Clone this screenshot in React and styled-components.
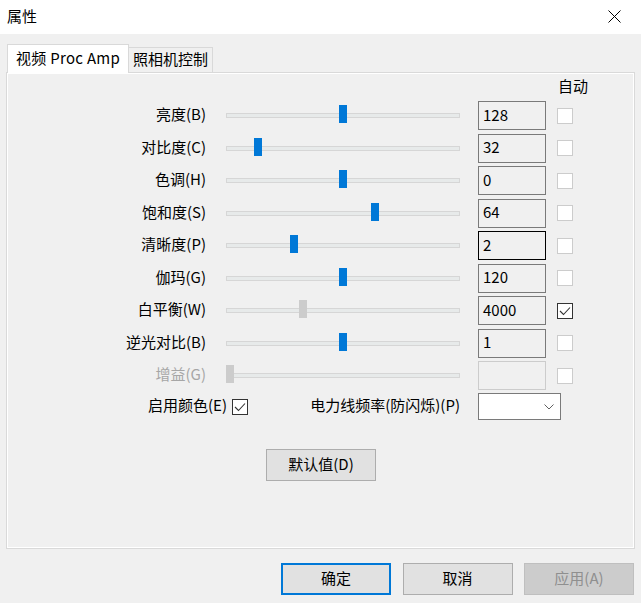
import styled, { createGlobalStyle, css } from "styled-components"

const GlobalStyle = createGlobalStyle`
  html, body {
    margin: 0;
    padding: 0;
    background: #f0f0f0;
  }
  body {
    font-family: "Noto Sans CJK SC", "Noto Sans", sans-serif;
    font-size: 15px;
    color: #000;
  }
`

const Window = styled.div`
  width: 641px;
  height: 603px;
  display: flex;
  flex-direction: column;
  background: #f0f0f0;
  overflow: hidden;
`

const TitleBar = styled.div`
  height: 34px;
  background: #fff;
  display: flex;
  align-items: center;
  justify-content: space-between;
  padding: 0 20px 2px 7px;
  box-sizing: border-box;
  flex-shrink: 0;
`

const Title = styled.span`
  font-size: 15px;
  line-height: 1;
  padding-bottom: 2px;
`

const Body = styled.div`
  padding: 10px 6px 0 6px;
  display: flex;
  flex-direction: column;
`

const Tabs = styled.div`
  display: flex;
  align-items: flex-end;
  height: 28px;
  padding-left: 1px;
  position: relative;
  z-index: 1;
`

const Tab = styled.div`
  box-sizing: border-box;
  border: 1px solid #d9d9d9;
  border-bottom: none;
  display: flex;
  align-items: center;
  justify-content: center;
  font-size: 15px;
  white-space: nowrap;
  padding-bottom: 3px;
  ${p => p.$active ? css`
    background: #fff;
    height: 29px;
    margin-bottom: -1px;
    width: 122px;
    letter-spacing: 0.3px;
  ` : css`
    background: #f0f0f0;
    height: 25px;
    border-left: none;
    width: 84px;
  `}
`

const Panel = styled.div`
  box-sizing: border-box;
  height: 477px;
  width: 629px;
  border: 1px solid #d9d9d9;
  box-shadow: inset 1px 1px 0 #fff, inset -1px -1px 0 #fff;
  padding: 5px 0 0 1px;
  display: flex;
  flex-direction: column;
`

const AutoHeader = styled.div`
  height: 23px;
  padding-left: 550px;
  display: flex;
  align-items: flex-start;
  line-height: 16px;
`

const Rows = styled.div`
  display: flex;
  flex-direction: column;
  gap: 3.5px;
`

const Row = styled.div`
  height: 29px;
  display: flex;
  align-items: center;
`

const Label = styled.div`
  width: ${p => p.$w || 198}px;
  margin-right: ${p => p.$gap ?? 20}px;
  text-align: right;
  white-space: nowrap;
  color: ${p => p.$disabled ? "#a6a6a6" : "#000"};
  line-height: 1;
  padding-bottom: 4px;
`

const Slider = styled.div`
  position: relative;
  width: 234px;
  height: 29px;
  margin-right: 18px;
  display: flex;
  align-items: center;
`

const Track = styled.div`
  width: 100%;
  height: 5px;
  box-sizing: border-box;
  background: #e7eaea;
  border: 1px solid #d6d6d6;
`

const Thumb = styled.div`
  position: absolute;
  top: 4px;
  width: 8px;
  height: 18px;
  background: ${p => p.$disabled ? "#cccccc" : "#0078d7"};
`

const TextBox = styled.div`
  box-sizing: border-box;
  width: 68px;
  height: 29px;
  margin-right: 11px;
  border: 1px solid ${p => p.$focus ? "#000" : p.$disabled ? "#cccccc" : "#7a7a7a"};
  padding: 0 0 3px 4px;
  display: flex;
  align-items: center;
  font-size: 15px;
`

const Check = styled.div`
  box-sizing: border-box;
  width: 16px;
  height: 16px;
  background: #fff;
  border: 1px solid ${p => p.$checked ? "#333" : "#cccccc"};
  display: flex;
  align-items: center;
  justify-content: center;
  flex-shrink: 0;
`

const OptionRow = styled.div`
  height: 27px;
  margin-top: 3px;
  display: flex;
  align-items: center;
`

const ColorGroup = styled.div`
  width: 238px;
  padding-left: 140px;
  box-sizing: border-box;
  display: flex;
  align-items: center;
  gap: 5px;
  white-space: nowrap;

  span {
    padding-bottom: 4px;
    line-height: 1;
  }
`

const Select = styled.div`
  box-sizing: border-box;
  width: 83px;
  height: 27px;
  background: #fff;
  border: 1px solid #7a7a7a;
  display: flex;
  align-items: center;
  justify-content: flex-end;
  padding-right: 6px;
`

const DefaultsRow = styled.div`
  display: flex;
  justify-content: center;
  margin-top: 29px;
`

const Button = styled.div`
  box-sizing: border-box;
  width: 110px;
  height: 32px;
  display: flex;
  align-items: center;
  justify-content: center;
  padding-bottom: 3px;
  background: ${p => p.$disabled ? "#cccccc" : "#e1e1e1"};
  border: ${p => p.$primary ? "2px solid #0078d7" : p.$disabled ? "1px solid #bfbfbf" : "1px solid #adadad"};
  color: ${p => p.$disabled ? "#8f8f8f" : "#000"};
  font-size: 15px;
`

const Footer = styled.div`
  display: flex;
  justify-content: flex-end;
  gap: 11.5px;
  padding: 14px 7px 0 0;
`

const CheckMark = ({ color = "#333" }) => (
  <svg width="12" height="10" viewBox="0 0 12 10">
    <path d="M1 5 L4.5 8.5 L11 1.5" fill="none" stroke={color} strokeWidth="1.1" />
  </svg>
)

const rows = [
  { label: "亮度(B)", value: "128", pos: 0.5 },
  { label: "对比度(C)", value: "32", pos: 0.125 },
  { label: "色调(H)", value: "0", pos: 0.5 },
  { label: "饱和度(S)", value: "64", pos: 0.64 },
  { label: "清晰度(P)", value: "2", pos: 0.285, focus: true },
  { label: "伽玛(G)", value: "120", pos: 0.5 },
  { label: "白平衡(W)", value: "4000", pos: 0.324, auto: true, thumbDisabled: true },
  { label: "逆光对比(B)", value: "1", pos: 0.5 },
  { label: "增益(G)", value: "", pos: 0, disabled: true },
]

const App = () => {
  return (
    <Window>
      <GlobalStyle />
      <TitleBar>
        <Title>属性</Title>
        <svg width="13" height="13" viewBox="0 0 13 13">
          <path d="M0.5 0.5 L12.5 12.5 M12.5 0.5 L0.5 12.5" stroke="#000" strokeWidth="1" />
        </svg>
      </TitleBar>
      <Body>
        <Tabs>
          <Tab $active>视频 Proc Amp</Tab>
          <Tab>照相机控制</Tab>
        </Tabs>
        <Panel>
          <AutoHeader>自动</AutoHeader>
          <Rows>
            {rows.map(r => (
              <Row key={r.label}>
                <Label $disabled={r.disabled}>{r.label}</Label>
                <Slider>
                  <Track />
                  <Thumb
                    $disabled={r.disabled || r.thumbDisabled}
                    style={{ left: Math.round(r.pos * 226) }}
                  />
                </Slider>
                <TextBox $focus={r.focus} $disabled={r.disabled}>{r.value}</TextBox>
                <Check $checked={r.auto}>{r.auto && <CheckMark />}</Check>
              </Row>
            ))}
          </Rows>
          <OptionRow>
            <ColorGroup>
              <span>启用颜色(E)</span>
              <Check $checked><CheckMark /></Check>
            </ColorGroup>
            <Label $w={214} $gap={18}>电力线频率(防闪烁)(P)</Label>
            <Select>
              <svg width="10" height="6" viewBox="0 0 10 6">
                <path d="M0.5 0.5 L5 5 L9.5 0.5" fill="none" stroke="#606060" strokeWidth="1" />
              </svg>
            </Select>
          </OptionRow>
          <DefaultsRow>
            <Button>默认值(D)</Button>
          </DefaultsRow>
        </Panel>
      </Body>
      <Footer>
        <Button $primary>确定</Button>
        <Button>取消</Button>
        <Button $disabled>应用(A)</Button>
      </Footer>
    </Window>
  )
}

export default App
